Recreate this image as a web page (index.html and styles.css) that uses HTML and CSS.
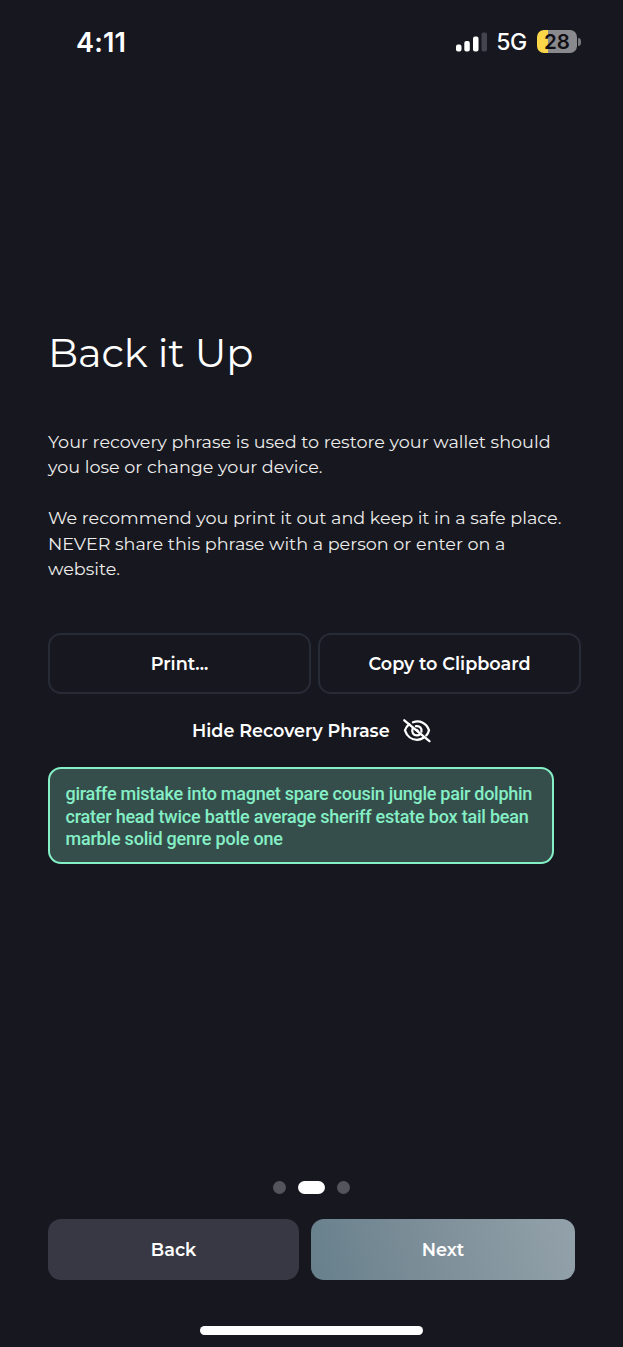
FILE: index.html
```html
<!DOCTYPE html>
<html lang="en">
<head>
<meta charset="utf-8">
<title>Back it Up</title>
<link rel="stylesheet" href="styles.css">
</head>
<body>
<div class="screen">
  <header class="status">
    <span class="time">4:11</span>
    <div class="indicators">
      <svg class="signal" width="31" height="20" viewBox="0 0 31 20"><g fill="#fff"><rect x="0" y="12.5" width="5.5" height="7" rx="2"/><rect x="8.3" y="9" width="5.5" height="10.5" rx="2"/><rect x="17" y="4.5" width="5.5" height="15" rx="2"/></g><rect x="25.5" y="0.5" width="5.5" height="19" rx="2" fill="#44444e"/></svg>
      <span class="network">5G</span>
      <div class="battery"><span>28</span></div><i class="nub"></i>
    </div>
  </header>
  <main class="content">
    <h1 class="title">Back it Up</h1>
    <div class="copy">
      <p>Your recovery phrase is used to restore your wallet should<br>you lose or change your device.</p>
      <p>We recommend you print it out and keep it in a safe place.<br>NEVER share this phrase with a person or enter on a<br>website.</p>
    </div>
    <div class="actions">
      <button class="outline">Print...</button>
      <button class="outline">Copy to Clipboard</button>
    </div>
    <div class="toggle"><span>Hide Recovery Phrase</span>
      <svg class="eye" width="28" height="24" viewBox="0 0 28 24" fill="none" stroke="#fff" stroke-width="2.3" stroke-linecap="round"><path d="M6.2 5.1C4.2 6.8 2.6 9 2 11.3C3.8 17 8.4 20.8 14 20.8C16.4 20.8 18.6 20.1 20.5 18.8"/><path d="M10 3.3C16.8 .7 23.8 4.4 26 11.3C25.5 13.3 24.6 15 23.3 16.4"/><path d="M9.7 9.4C8.2 13.2 10.4 16.3 14 16.3C15.2 16.3 16.2 15.9 17 15.3"/><path d="M13 7.2C16.8 6.5 19.2 9.6 18.4 12.6"/><path d="M13.7 11L15 12.1"/><path d="M1.3 1.3L26.4 22.2"/></svg>
    </div>
    <div class="phrase"><span class="tight">giraffe mistake into magnet spare cousin jungle pair dolphin</span><br>crater head twice battle average sheriff estate box tail bean<br>marble solid genre pole one</div>
  </main>
  <footer class="footer">
    <div class="dots"><i></i><i class="active"></i><i></i></div>
    <nav class="nav"><button class="back">Back</button><button class="next">Next</button></nav>
    <div class="home"></div>
  </footer>
</div>
</body>
</html>
```
FILE: styles.css
```css
* { box-sizing: border-box; }
body { margin: 0; background: #171720; color: #fff; font-family: Montserrat, Inter, sans-serif; }
.screen { width: 623px; height: 1347px; display: flex; flex-direction: column; }
.status { height: 84px; padding: 0 42px 0 76px; display: flex; justify-content: space-between; align-items: center; }
.time { font: 600 27px/30px Inter, sans-serif; letter-spacing: .2px; padding-top: 1px; }
.indicators { display: flex; align-items: center; }
.network { font: 500 23px/28px Inter, sans-serif; letter-spacing: -.3px; margin: 0 10px 0 10px; }
.signal { margin-right: -1px; }
.battery { width: 40px; height: 23px; margin-bottom: 1px; border-radius: 7px; background: linear-gradient(90deg, #fad648 0 11px, #89898e 11px); color: #101014; font: 600 20.5px/23px Inter, sans-serif; text-align: center; }
.nub { width: 3px; height: 8px; margin-left: 1px; background: #77777c; border-radius: 0 4px 4px 0; }
.content { padding: 241px 42px 0 48px; }
.title { margin: 0; font-size: 40px; line-height: 56px; font-weight: 400; letter-spacing: -.1px; }
.copy { margin-top: 48px; font-size: 17.58px; line-height: 25.45px; color: #ececea; white-space: nowrap; }
.copy p { margin: 0 0 25.45px; }
.actions { display: flex; gap: 7px; margin-top: 51.3px; }
button { font: 600 17.6px/24px Montserrat, Inter, sans-serif; color: #fff; border: 0; border-radius: 13px; height: 61px; padding: 0; }
.outline { flex: 1; background: transparent; border: 2px solid #272b36; }
.toggle { display: flex; align-items: center; height: 28px; margin: 22px 0 0 144px; font-size: 17.6px; font-weight: 600; white-space: nowrap; }
.eye { margin: 1px 0 0 13px; }
.phrase { width: 506px; height: 97px; margin-top: 23px; padding: 14px 15.5px; border: 2px solid #85efc6; border-radius: 13px; background: #354e4b; color: #85efc6; font: 500 18px/22.5px Roboto, sans-serif; letter-spacing: -.21px; white-space: nowrap; }
.tight { letter-spacing: -.26px; }
.footer { margin-top: auto; padding: 0 48px 12px; }
.dots { display: flex; justify-content: center; gap: 12px; }
.dots i { width: 13px; height: 13px; border-radius: 7px; background: #54545d; }
.dots .active { width: 27px; background: #fff; }
.nav { display: flex; gap: 12px; margin-top: 25px; }
.back { width: 251px; background: #373843; }
.next { width: 264px; background: linear-gradient(75deg, #67808c, #7f909a 50%, #93a2aa); }
.home { width: 223px; height: 9px; margin: 46px auto 0; border-radius: 5px; background: #fff; }
```
